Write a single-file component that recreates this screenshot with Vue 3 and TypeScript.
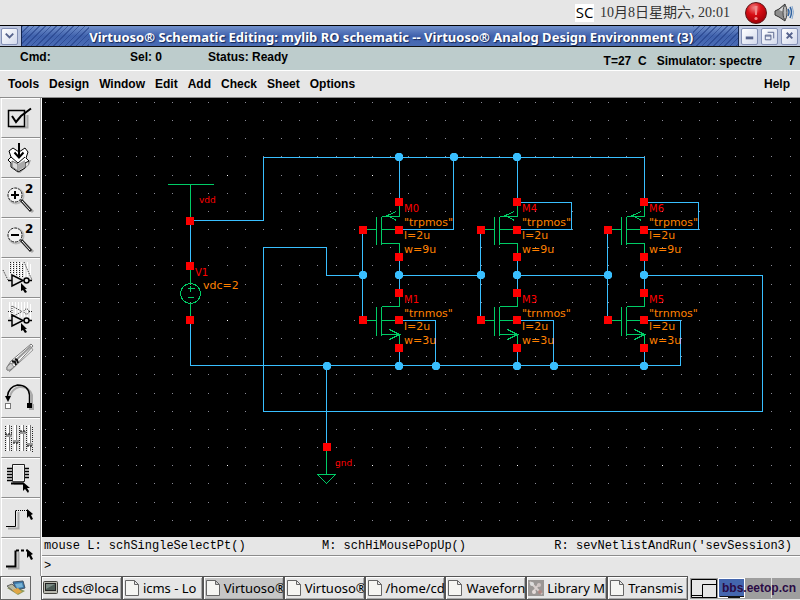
<script setup lang="ts">
import { ref } from 'vue'

interface Device {
  name: string
  kind: 'p' | 'n'
  x: number
  width: string
}

type Point = [number, number]

const menus = ['Tools', 'Design', 'Window', 'Edit', 'Add', 'Check', 'Sheet', 'Options']

const tools = [
  'Check and Save', 'Save', 'Zoom In by 2', 'Zoom Out by 2', 'Stretch', 'Copy',
  'Delete', 'Undo', 'Property', 'Component', 'Wire Narrow', 'Wire Wide',
]

const tasks = [
  { label: 'cds@loca', icon: 'terminal' },
  { label: 'icms - Lo', icon: 'page' },
  { label: 'Virtuoso®', icon: 'page', active: true },
  { label: 'Virtuoso®', icon: 'page' },
  { label: '/home/cd', icon: 'page' },
  { label: 'Waveforn', icon: 'page' },
  { label: 'Library M', icon: 'app' },
  { label: 'Transmis', icon: 'page' },
]

const prompt = ref('')

// Grid: one dot per snap step, every eighth one is a major point.
const pitch = 18.16
const gridPoints = Array.from({ length: 42 * 25 }, (_, n) => {
  const i = n % 42
  const j = Math.floor(n / 42)
  return {
    x: Math.round(45 + i * pitch),
    y: Math.round(102 + j * pitch),
    major: i % 8 === 2 && j % 8 === 4,
  }
}).filter((p) => p.y < 535 && p.x < 798)

const devices: Device[] = [
  { name: 'M0', kind: 'p', x: 399, width: 'w=9u' },
  { name: 'M4', kind: 'p', x: 517, width: 'w=9u' },
  { name: 'M6', kind: 'p', x: 644, width: 'w=9u' },
  { name: 'M1', kind: 'n', x: 399, width: 'w=3u' },
  { name: 'M3', kind: 'n', x: 517, width: 'w=3u' },
  { name: 'M5', kind: 'n', x: 644, width: 'w=3u' },
]

const wires = [
  'M190 220H263V157H644V202', 'M399 157V202', 'M517 157V202',
  'M453 157V229H399', 'M517 202H571V229H517', 'M644 202H698V229H644',
  'M362 275H326V247H263V411H762V275H644',
  'M362 230V320', 'M480 230V320', 'M607 230V320',
  'M399 275H480', 'M517 275H607',
  'M399 257V293', 'M517 257V293', 'M644 257V293',
  'M399 348V365', 'M517 348V365', 'M644 348V365',
  'M190 221V266', 'M190 320V365H680V320H644',
  'M399 320H435V365', 'M517 320H553V365', 'M326 365V447',
].join('')

const junctions: Point[] = [
  [399, 157], [454, 157], [517, 157],
  [363, 275], [399, 275], [481, 275], [517, 275], [608, 275], [644, 275],
  [327, 366], [399, 366], [436, 366], [517, 366], [554, 366], [644, 366],
]

const pins: Point[] = [
  [190, 221], [190, 266], [190, 320], [327, 447],
  ...devices.flatMap((d): Point[] =>
    d.kind === 'p'
      ? [[d.x, 202], [d.x, 230], [d.x, 257], [d.x - 36, 230]]
      : [[d.x, 293], [d.x, 320], [d.x, 348], [d.x - 36, 320]],
  ),
]

function symbol(d: Device): string {
  const { x } = d
  return d.kind === 'p'
    ? `M${x - 36} 229H${x - 23}M${x - 23} 216V244M${x - 18} 216V244M${x} 203V216H${x - 18}M${x - 18} 229H${x}M${x - 18} 243H${x}V257M${x - 3} 211L${x - 12} 215L${x - 3} 220`
    : `M${x - 36} 320H${x - 23}M${x - 23} 306V335M${x - 18} 306V335M${x} 293V306H${x - 18}M${x - 18} 320H${x}M${x - 18} 334H${x}V348M${x - 10} 329L${x} 334L${x - 10} 339`
}
</script>

<template>
  <div class="desktop">
    <header class="panel">
      <span class="ime">SC</span>
      <time class="clock">10月8日星期六, 20:01</time>
      <svg class="alert" viewBox="0 0 24 24" aria-hidden="true">
        <defs>
          <radialGradient id="alert-fill" cx="40%" cy="25%" r="75%">
            <stop offset="0" stop-color="#f08080" /><stop offset=".45" stop-color="#d80d14" /><stop offset="1" stop-color="#a00008" />
          </radialGradient>
        </defs>
        <circle cx="12" cy="12" r="10.5" fill="url(#alert-fill)" stroke="#5c1a1c" />
        <path d="M10.500 5h3l-.6 9h-1.800z" fill="#f08c8c" /><circle cx="12" cy="17.500" r="1.600" fill="#f08c8c" />
      </svg>
      <svg class="speaker" viewBox="0 0 20 20" aria-hidden="true">
        <path d="M1 8l4-2 6-5q3 9 0 17l-6-4-4-2z" fill="#8d8d8d" stroke="#333" />
        <path d="M5 7l5-4v6z" fill="#ddd" /><ellipse cx="11" cy="9.500" rx="2" ry="7" fill="#bbb" stroke="#444" />
        <path d="M14 6q2 3 0 7M16 4q3 5 0 11" fill="none" stroke="#2f62a0" stroke-width="1.500" /><path d="M18 3q3 6 0 13" fill="none" stroke="#86a8cf" />
      </svg>
    </header>

    <div class="titlebar">
      <div class="wm left">
        <button class="wm-btn" aria-label="Window menu"><svg viewBox="0 0 16 16"><path d="M4 5l4 4 4-4" class="glyph" /></svg></button>
      </div>
      <h1>Virtuoso® Schematic Editing: mylib RO schematic -- Virtuoso® Analog Design Environment (3)</h1>
      <div class="wm">
        <button class="wm-btn" aria-label="Minimize"><svg viewBox="0 0 16 16"><path d="M4 9.500h8" class="glyph thick" /></svg></button>
        <button class="wm-btn" aria-label="Restore"><svg viewBox="0 0 16 16"><path d="M6 3.500h6.500V10M3.500 6.500h6v5h-6zM3.500 7.500h6" class="glyph thin" /></svg></button>
        <button class="wm-btn" aria-label="Close"><svg viewBox="0 0 16 16"><path d="M5 4l6 6M11 4l-6 6" class="glyph" /></svg></button>
      </div>
    </div>

    <div class="status">
      <span class="cmd">Cmd:</span>
      <span class="sel">Sel: 0</span>
      <span class="ready">Status: Ready</span>
      <span class="env"><span>T=27 &nbsp;C</span><span>Simulator: spectre</span></span>
      <span class="count">7</span>
    </div>

    <nav class="menubar">
      <button v-for="m in menus" :key="m">{{ m }}</button>
      <button class="help">Help</button>
    </nav>

    <main class="work">
      <div class="toolbar" role="toolbar" aria-label="Schematic tools">
        <button v-for="(t, i) in tools" :key="t" class="tool" :aria-label="t">
          <svg viewBox="0 0 40 40">
            <g v-if="i === 0">
              <path d="M10 29.500H27.500V17" class="shade" />
              <path d="M8.500 12.500h16v16h-16z" class="frame" />
              <path d="M12 18l4 6 5-6L31 10.500" class="bold" />
            </g>
            <g v-else-if="i === 1">
              <path d="M18 34l10-7v-4l3-1-2 5-9 8z" fill="#999" />
              <path d="M8 22l3-3-2-6 4-3 6 4 6-4 3 4-2 6 3 3-4 2v5l-7 4-7-5v-4z" fill="#fff" stroke="#000" />
              <path d="M18 26v7l-6-4v-6z" fill="#ddd" stroke="#666" /><path d="M18 26l7-4v7l-7 4z" fill="#aaa" />
              <path d="M19 5v14M14.500 14.500l4.500 5 4.500-5" class="bold" />
              <path d="M11 19l7 6 7-6" class="line" />
            </g>
            <g v-else-if="i === 2 || i === 3">
              <path d="M22 23l11 11" stroke="#aaa" stroke-width="3" fill="none" />
              <circle cx="16" cy="18" r="7.500" fill="none" stroke="#bbb" stroke-width="2" />
              <path d="M21 22l10 11" stroke="#222" stroke-width="3" fill="none" />
              <path d="M22 23l8 9" stroke="#fff" fill="none" />
              <circle cx="15" cy="17" r="7" fill="#f4f4f4" stroke="#222" stroke-dasharray="3 1" />
              <path d="M11 17h8" class="bold" /><path v-if="i === 2" d="M15 13v8" class="bold" />
              <text x="25" y="15" class="two">2</text>
            </g>
            <g v-else-if="i === 4 || i === 5">
              <path d="M9.500 4v15M12.500 4v15M15.500 4v15M18.500 4v15M21.500 4v15M24.500 4v15M27.500 4v15M30.500 6v15" stroke="#fff" fill="none" />
              <path v-if="i === 4" d="M3 12l5 10M24 4l8 18M10.500 4v12M13.500 4v12M16.500 4v14M19.500 4v15M22.500 6v13" class="hatch" />
              <g v-else>
                <path d="M8 13.500h4M12 8v11l10-5.500zM29 13.500h3" class="hatch" />
                <circle cx="26.500" cy="13.500" r="2.500" class="hatch" />
              </g>
              <path d="M8 22.500h4M12 17v11l11-5.500zM29 22.500h3" class="line heavy" />
              <circle cx="26.500" cy="22.500" r="2.500" class="line heavy" />
              <path d="M21 25v8l2-1 2 3 2-1-2-3h2z" />
            </g>
            <g v-else-if="i === 6">
              <path d="M9 34l24-22-2-3" stroke="#999" fill="none" />
              <path d="M7 29l4-6L31 6l2 2-17 19-5 5H7z" fill="#fff" stroke="#777" />
              <path d="M12 26L31 8" stroke="#999" stroke-width="2" fill="none" />
              <path d="M12 23l3 1 1 3M15 21l2 1 1 3" stroke="#111" stroke-width="2" fill="none" />
              <path d="M7 29l4-4 3 4-4 3H7z" fill="#ccc" stroke="#888" />
            </g>
            <g v-else-if="i === 7">
              <path d="M10 18q2-7 9-9 10-1 13 8v10" class="shade" />
              <path d="M7.500 18q1-9 10-11 11 0 12 10v8" class="line heavy" />
              <path d="M5 18h6l-3 6z" /><path d="M29 31h4v-5" class="shade" /><rect x="27" y="25" width="5" height="5" />
              <rect x="5.500" y="25.500" width="5" height="5" fill="#fff" stroke="#000" stroke-dasharray="1 1" />
            </g>
            <g v-else-if="i === 8">
              <path d="M5.500 8v25M11.500 8v25M19.500 8v25M26.500 8v25M32.500 9v25" class="hatch" />
              <path d="M8.500 7v26M15.500 7v26M22.500 7v26M29.500 7v26" stroke="#fff" stroke-width="3" fill="none" />
              <path d="M9.500 7v26M16.500 7v26M23.500 7v26M30.500 7v26" stroke="#777" fill="none" />
              <path d="M6 16h6v3H6zM13 22h6v3h-6zM20 13h6v3h-6zM27 25h6v3h-6z" fill="#999" />
              <path d="M5 16h7M13 25h6M20 13h6M27 28h6" class="line" stroke-dasharray="2 1" />
            </g>
            <g v-else-if="i === 9">
              <path d="M7 10.500h5M7 13.500h5M7 16.500h5M7 19.500h5M7 22.500h5M25 10.500h4M25 13.500h4M25 16.500h4M25 19.500h4" class="line heavy" />
              <path d="M12.500 6.500h12v17h-12z" fill="#f6f6f6" stroke="#222" />
              <path d="M14 8h9v14h-9z" fill="#ddd" opacity=".6" />
              <path d="M12 23.500h11v3H14z" fill="#777" /><path d="M11 25.500h12" class="bold" />
              <path d="M23 24v9l2-2 3 4 1-2-2-3h3z" />
            </g>
            <g v-else>
              <path d="M8 30.500h10.500V14" class="shade" />
              <path d="M6 28.500h9.500V12.500" :class="i === 10 ? 'line' : 'bold'" />
              <path d="M16 12.500h11" :class="i === 10 ? 'line' : 'bold'" :stroke-dasharray="i === 10 ? '1 1' : '3 2'" />
              <path d="M27 11v9l2-2 2 4 2-1-2-4 2-1z" />
            </g>
          </svg>
        </button>
      </div>

      <div class="view">
        <svg class="schematic" viewBox="42 98 758 439" role="img" aria-label="Ring oscillator schematic">
          <rect
            v-for="p in gridPoints" :key="`${p.x}-${p.y}`" :x="p.x" :y="p.y"
            width="1" height="1" :class="p.major ? 'major' : 'minor'"
          />
          <g transform="translate(.5 .5)" class="strokes">
            <path :d="wires" class="wire" />
            <path v-for="d in devices" :key="d.name" :d="symbol(d)" class="part" />
            <path d="M167 184H213M190 184V221M190 266V283M190 303V320M187 288H194M190 285V291M187 297H193M326 448V474M317 474H335L326 483Z" class="part" />
            <circle cx="190" cy="293" r="10" class="part" />
          </g>
          <path
            v-for="[x, y] in junctions" :key="`j${x}-${y}`"
            :d="`M${x - 2} ${y - 4}h4l2 2v4l-2 2h-4l-2-2v-4z`" class="junction"
          />
          <rect v-for="[x, y] in pins" :key="`p${x}-${y}`" :x="x - 4" :y="y - 4" width="8" height="8" class="pin" />
          <g v-for="d in devices" :key="`t${d.name}`" :transform="`translate(${d.x + 5} ${d.kind === 'p' ? 212 : 303})`">
            <text class="name">{{ d.name }}</text>
            <text class="prop" y="14">"{{ d.kind === 'p' ? 'trpmos' : 'trnmos' }}"</text>
            <text class="prop" y="27">l=2u</text>
            <text class="prop" y="41">{{ d.width }}</text>
          </g>
          <text x="199" y="203" class="net">vdd</text>
          <text x="195" y="276" class="name">V1</text>
          <text x="203" y="289" class="prop">vdc=2</text>
          <text x="335" y="466" class="net">gnd</text>
        </svg>
      </div>

      <div class="hints">
        <span>mouse L: schSingleSelectPt()</span>
        <span>M: schHiMousePopUp()</span>
        <span>R: sevNetlistAndRun('sevSession3)</span>
      </div>
      <label class="prompt">&gt;<input v-model="prompt" aria-label="Command input" /></label>
    </main>

    <footer class="taskbar">
      <button class="show" aria-label="Show desktop">
        <svg viewBox="0 0 20 16">
          <path d="M1 8l7-2 11 5-7 4z" fill="#8d9a5b" /><path d="M7 2l10-1 2 7-9 2z" fill="#3c78aa" stroke="#425466" />
          <path d="M9 4l7-1 1 4-6 1z" fill="#77b3d5" /><path d="M1 6l5-2 5 5-4 2z" fill="#b9b9a0" stroke="#666" />
          <path d="M6 10l6-2 4 4-5 2z" fill="#e0a646" />
        </svg>
      </button>
      <div class="tasks">
        <button v-for="(t, i) in tasks" :key="i" class="task" :class="{ active: t.active }">
          <svg viewBox="0 0 16 16" aria-hidden="true">
            <g v-if="t.icon === 'terminal'">
              <rect x=".5" y="1.500" width="14" height="12" rx="1" fill="#b8b8ae" stroke="#44443e" />
              <rect x="2.500" y="3.500" width="10" height="7" fill="#4b5b55" stroke="#222" /><path d="M3 4h9L3 9z" fill="#7b8b84" />
            </g>
            <g v-else-if="t.icon === 'app'">
              <rect width="16" height="16" fill="#9b9795" /><path d="M2 2l12 12M5 12l6-8" stroke="#d9d0ce" stroke-width="2" />
              <circle cx="4" cy="4" r="2" fill="#ddd" /><circle cx="11" cy="5" r="2" fill="#cfc5c3" /><circle cx="6" cy="12" r="2" fill="#e5dcda" /><circle cx="12" cy="12" r="2" fill="#b08884" />
            </g>
            <path v-else d="M1.500.500h9l4 4v11h-13zM10.500.500v4h4" fill="#f5f5f2" stroke="#666" />
          </svg>
          <span>{{ t.label }}</span>
        </button>
      </div>
      <div class="pager">
        <svg viewBox="0 0 110 24" aria-hidden="true">
          <rect y="2" width="110" height="21" fill="#9e9e9e" />
          <path d="M1.500 3.500h25v18h-25zM12.500 8.500h14v13h-14zM1.500 19.500h11" fill="#e6e6e6" stroke="#000" />
          <rect x="28.500" y="2.500" width="26" height="19" fill="#4466ae" stroke="#fff" /><path d="M30 20.500h24M38 21.500h12" stroke="#111" />
          <path d="M81.500 2v20" stroke="#ddd" />
        </svg>
        <a class="mark" href="#">bbs.eetop.cn</a>
      </div>
    </footer>
  </div>
</template>

<style>
body { margin: 0; background: #e6e6e6; }
</style>

<style scoped>
* { box-sizing: border-box; }
button { margin: 0; padding: 0; border: 0; border-radius: 0; background: none; color: inherit; font: inherit; }
svg { display: block; }

.desktop {
  display: flex; flex-direction: column; min-height: 100vh; overflow: hidden;
  background: #e6e6e6; color: #000; font: 12px "Liberation Sans", sans-serif;
}

.panel { display: flex; align-items: center; justify-content: flex-end; height: 25px; padding-right: 6px; }
.ime { display: flex; justify-content: center; width: 19px; height: 18px; background: #fff; font: 15px/16px "Open Sans", sans-serif; }
.clock { margin: 0 14px 0 6px; color: #333; font: 14px/24px "Liberation Serif", "Noto Sans CJK SC", serif; white-space: nowrap; }
.alert { width: 24px; height: 24px; }
.speaker { width: 20px; height: 20px; margin-left: 6px; }

.titlebar {
  display: flex; height: 22px; border-top: 1px solid #000; border-bottom: 1px solid #111;
  background: linear-gradient(#7392cc, #4062ad 50%, #4a6cb4);
}
.titlebar h1 {
  display: flex; flex: 1; min-width: 0; margin: 0; color: #fff; white-space: nowrap;
  font: 700 13px/22px "Noto Sans", sans-serif; text-shadow: 1px 1px 1px #122656;
}
.titlebar h1::before, .titlebar h1::after {
  content: ""; flex: 3; background: repeating-linear-gradient(135deg, #1c388088 0 1px, transparent 1px 4px);
}
.titlebar h1::after { flex: 2; }
.wm { display: flex; align-items: center; gap: 3px; padding: 0 2px; background: #bcc6df; border-left: 1px solid #14264f; }
.wm.left { padding: 0 3px 0 1px; border-left: 0; border-right: 1px solid #14264f; }
.wm-btn { width: 17px; height: 17px; border: 1px solid #8390b5; border-radius: 2px; background: linear-gradient(135deg, #fff, #d3daec); }
.glyph { fill: none; stroke: #56638c; stroke-width: 2; }
.thick { stroke-width: 3; }
.thin { stroke-width: 1; }

.status { display: flex; height: 24px; padding: 0 5px 0 20px; border-bottom: 1px solid #fff; background: #bdcccc; font-weight: 700; line-height: 20px; white-space: nowrap; }
.cmd { flex: 0 0 110px; }
.sel { flex: 0 0 78px; }
.env { display: flex; gap: 10px; margin-left: auto; line-height: 28px; }
.count { width: 33px; line-height: 28px; text-align: right; }

.menubar { display: flex; gap: 10px; height: 27px; padding: 0 10px 0 8px; border-bottom: 1px solid #8c8c8c; font-weight: 700; line-height: 26px; }
.menubar .help { margin-left: auto; }

.work { flex: 1; display: grid; grid-template-columns: 42px minmax(0, 1fr); grid-template-rows: 1fr 19px 20px; }
.toolbar { grid-row: 1 / 4; height: 0; min-height: 100%; overflow: hidden; border-right: 1px solid #fff; background: linear-gradient(90deg, transparent 39px, #999 39px); }
.tool { display: block; width: 39px; height: 40px; margin-left: 1px; border-top: 1px solid #fff; border-left: 1px solid #fff; border-bottom: 1px solid #8e8e8e; background: #e6e6e6; }
.tool svg { width: 40px; height: 40px; margin: -1px 0 0 -2px; }
.line { fill: none; stroke: #000; stroke-width: 1; }
.frame { fill: none; stroke: #000; stroke-width: 1.5; }
.heavy { stroke-width: 1.5; }
.bold { fill: none; stroke: #000; stroke-width: 2; }
.shade { fill: none; stroke: #aaa; stroke-width: 2; }
.hatch { fill: none; stroke: #222; stroke-dasharray: 1 1; }
.two { font: 700 12px "DejaVu Sans", sans-serif; }

.view { background: #000; }
.schematic { width: 100%; height: auto; }
.minor { fill: #8c8c98; }
.major { fill: #fff; }
.wire, .part { fill: none; stroke-width: 1; }
.strokes { shape-rendering: crispEdges; }
.wire { stroke: #39bfff; }
.part { stroke: #00cc66; }
.junction { fill: #39bfff; }
.pin { fill: #f00; }
.prop, .name, .net { font: 10px "DejaVu Sans", sans-serif; }
.prop { fill: #ff8000; font-size: 11px; }
.name, .net { fill: #f00; }
.net { font-size: 9px; }

.hints, .prompt { font: 12px/18px "Liberation Mono", monospace; }
.hints { display: grid; grid-template-columns: 278px 1fr auto; padding: 0 8px 0 2px; border-bottom: 1px solid #8c8c8c; white-space: nowrap; }
.prompt { display: flex; padding-left: 2px; border-top: 1px solid #fff; }
.prompt input { flex: 1; min-width: 0; padding: 0; border: 0; outline: 0; background: transparent; font: inherit; }

.taskbar { display: flex; height: 24px; }
.show { width: 31px; border: 1px solid #666; box-shadow: inset 1px 1px #fff; }
.show svg { width: 20px; height: 16px; margin: 0 auto; }
.tasks { flex: 1; display: flex; min-width: 0; margin-left: 10px; }
.task {
  flex: 1 1 0; display: flex; align-items: center; gap: 3px; min-width: 0; padding: 0 1px; overflow: hidden;
  border: 1px solid #555; box-shadow: inset 1px 1px #fff, inset -1px -1px #aaa; font: 13px/20px "Noto Sans", sans-serif; white-space: nowrap;
}
.task.active { background: #c6c6c6; }
.task svg { flex: none; width: 16px; height: 16px; }
.pager { position: relative; flex: 0 0 110px; margin-left: 2px; }
.pager svg { width: 110px; height: 24px; }
.mark { position: absolute; right: 4px; bottom: 3px; color: #2b0b45; font: 700 12px/18px "Liberation Sans", sans-serif; text-decoration: none; }
</style>
